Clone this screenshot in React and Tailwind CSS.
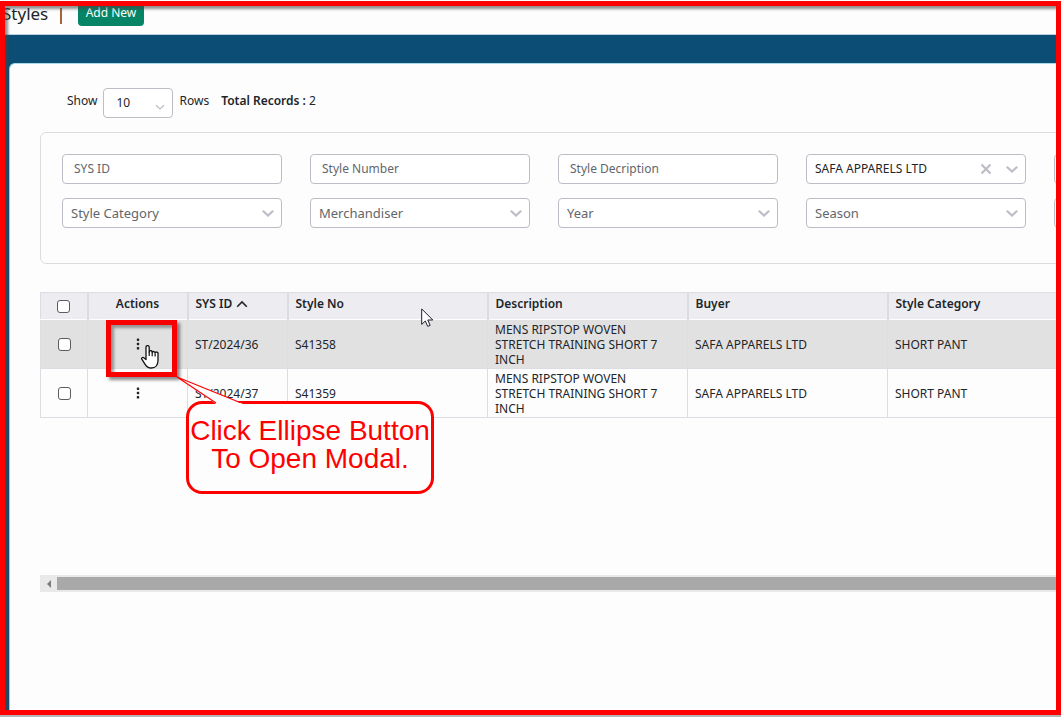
import React from "react";

const rows = [
  { id: "ST/2024/36", no: "S41358", active: true },
  { id: "ST/2024/37", no: "S41359", active: false },
];

function Chevron({ className }) {
  return (
    <svg viewBox="0 0 14 14" className={className} fill="none" stroke="currentColor" strokeWidth="2.2" aria-hidden="true">
      <path d="M1.8 4.8 7 9.6l5.2-4.8" />
    </svg>
  );
}

const fieldBox = "h-[30px] w-full rounded border border-[#bdbdc5] bg-white outline-none";

function TextField({ label }) {
  return (
    <input
      type="text"
      aria-label={label}
      placeholder={label}
      className={`${fieldBox} px-[11px] pb-0.5 text-xs text-[#212529] placeholder:text-[#62666b]`}
    />
  );
}

function SelectField({ label, value }) {
  return (
    <div className="relative">
      <select
        aria-label={label}
        className={`${fieldBox} appearance-none pr-12 pl-2 ${value ? "text-xs text-[#212529]" : "pt-0.5 text-[13px] text-[#62666b]"}`}
      >
        <option>{value || label}</option>
      </select>
      {value && (
        <button type="button" aria-label="Clear buyer" className="absolute top-2 right-[33px] text-[#bdbdc5]">
          <svg viewBox="0 0 14 14" className="size-3.5" fill="none" stroke="currentColor" strokeWidth="2.2" aria-hidden="true">
            <path d="m2.5 2.5 9 9m0-9-9 9" />
          </svg>
        </button>
      )}
      <Chevron className="pointer-events-none absolute top-2 right-[7px] size-3.5 text-[#bdbdc5]" />
    </div>
  );
}

function Check({ label }) {
  return (
    <input
      type="checkbox"
      aria-label={label}
      className="mx-auto block size-[13px] appearance-none rounded-[3px] border border-[#5c5c5c] bg-white"
    />
  );
}

function HeadCell({ children }) {
  return (
    <th scope="col" className="border-l-2 border-[#dcdce3] px-[7px] pb-1 text-left font-semibold">
      {children}
    </th>
  );
}

function Cell({ children }) {
  return <td className="border-l border-[#dcdce3] py-0 pr-5 pl-[7px]">{children}</td>;
}

export default function App() {
  return (
    <div className="relative flex min-h-screen flex-col overflow-hidden bg-[#0b4d75] font-['Noto_Sans','Open_Sans',sans-serif] text-xs text-[#212529]">
      <header className="flex h-[35px] shrink-0 items-start border-b border-[#b9d3e4] bg-[#fdfdfd] pl-0.5">
        <h1 className="flex gap-2 text-[17px] leading-7">
          <span>Styles</span>
          <span>|</span>
        </h1>
        <button type="button" className="ml-3 h-[26px] rounded bg-[#058466] px-2 text-xs text-white">
          Add New
        </button>
      </header>

      <main className="mt-7 ml-[9px] flex-1 overflow-hidden rounded-tl-md border-t border-l border-[#a9d9ea] bg-[#fdfdfd] pt-6 pl-[30px]">
        <div className="flex items-center">
          <label htmlFor="page-size" className="ml-[27px] pb-1">Show</label>
          <div className="relative ml-1.5">
            <select id="page-size" className="h-[30px] w-[70px] appearance-none rounded border border-[#bdbdc5] bg-white pl-3">
              <option>10</option>
            </select>
            <svg viewBox="0 0 10 10" className="pointer-events-none absolute right-2 bottom-1.5 size-2.5" fill="none" stroke="#bdbdc5" strokeWidth="1.2" aria-hidden="true">
              <path d="M1 3.2 5 7l4-3.8" />
            </svg>
          </div>
          <span className="ml-1.5 pb-1">Rows</span>
          <p className="ml-3 pb-1">
            <span className="font-semibold">Total Records :</span> 2
          </p>
        </div>

        <form className="mt-3.5 h-[132px] w-[1280px] rounded-md border border-[#dcdce0] px-[21px] pt-[21px]">
          <div className="grid grid-cols-[repeat(5,220px)] gap-x-7 gap-y-3.5">
            <TextField label="SYS ID" />
            <TextField label="Style Number" />
            <TextField label="Style Decription" />
            <SelectField label="Buyer" value="SAFA APPARELS LTD" />
            <input type="text" aria-label="Department" className={fieldBox} />
            <SelectField label="Style Category" />
            <SelectField label="Merchandiser" />
            <SelectField label="Year" />
            <SelectField label="Season" />
            <input type="text" aria-label="Status" className={fieldBox} />
          </div>
        </form>

        <div className="mt-7 min-h-[283px] overflow-hidden">
          <table className="w-[1247px] table-fixed border-collapse border border-[#dcdce3]">
            <colgroup>
              <col className="w-[47px]" />
              <col className="w-[100px]" />
              <col className="w-[100px]" />
              <col className="w-[200px]" />
              <col className="w-[200px]" />
              <col className="w-[200px]" />
              <col className="w-[400px]" />
            </colgroup>
            <thead>
              <tr className="h-[27px] border-b border-white bg-[#ededf1]">
                <th scope="col"><Check label="Select all styles" /></th>
                <th scope="col" className="border-l-2 border-[#dcdce3] pb-1 font-semibold">Actions</th>
                <HeadCell>
                  <span className="flex items-center gap-1">
                    SYS ID
                    <svg viewBox="0 0 12 8" className="h-2 w-3" fill="none" stroke="currentColor" strokeWidth="1.6" aria-hidden="true">
                      <path d="M1.2 6.8 6 2l4.8 4.8" />
                    </svg>
                  </span>
                </HeadCell>
                <HeadCell>Style No</HeadCell>
                <HeadCell>Description</HeadCell>
                <HeadCell>Buyer</HeadCell>
                <HeadCell>Style Category</HeadCell>
              </tr>
            </thead>
            <tbody className="leading-[15px]">
              {rows.map((row) => (
                <tr key={row.id} className={`h-[49px] border-b border-[#dcdce3] ${row.active ? "bg-[#e1e1e1]" : "bg-[#fdfdfd]"}`}>
                  <td className="p-0"><Check label={`Select ${row.id}`} /></td>
                  <td className="border-l border-[#dcdce3] p-0">
                    <button type="button" aria-label={`Actions for ${row.id}`} className="mx-auto block">
                      <svg viewBox="0 0 4 12" className="h-3 w-1" fill="currentColor" aria-hidden="true">
                        <rect x="0.8" y="0.5" width="2.4" height="2.4" rx="0.6" />
                        <rect x="0.8" y="4.8" width="2.4" height="2.4" rx="0.6" />
                        <rect x="0.8" y="9.1" width="2.4" height="2.4" rx="0.6" />
                      </svg>
                    </button>
                  </td>
                  <Cell>{row.id}</Cell>
                  <Cell>{row.no}</Cell>
                  <Cell>MENS RIPSTOP WOVEN STRETCH TRAINING SHORT 7 INCH</Cell>
                  <Cell>SAFA APPARELS LTD</Cell>
                  <Cell>SHORT PANT</Cell>
                </tr>
              ))}
            </tbody>
          </table>
        </div>

        <div className="flex h-[17px] items-center bg-[#e9e9e9]">
          <button type="button" aria-label="Scroll left" className="flex w-[17px] shrink-0 justify-center">
            <svg viewBox="0 0 4 8" className="h-2 w-1" fill="#7d7d7d" aria-hidden="true">
              <path d="M4 0v8L0 4z" />
            </svg>
          </button>
          <div className="h-[13px] flex-1 bg-[#a9a9a9]" />
        </div>
      </main>

      {/* Tutorial annotations */}
      <div className="pointer-events-none absolute inset-x-0 top-0 bottom-0 border-t border-b-2 border-t-white border-b-[#b5b5b5]">
        <div className="h-full border-[5px] border-[#ff0000] shadow-[inset_3px_3px_3px_rgba(70,70,70,0.6)]" />
      </div>

      <div className="pointer-events-none absolute top-80 left-[106px] h-[57px] w-[71px] border-[5px] border-[#f90000] shadow-[3px_3px_3px_rgba(0,0,0,0.45),inset_3px_3px_3px_rgba(0,0,0,0.35)]" />

      <p className="pointer-events-none absolute top-[401px] left-[186px] flex h-[93px] w-[248px] justify-center rounded-[16px] border-[3px] border-[#ff0000] bg-[#fdfdfd] pt-[13px] text-center font-['Liberation_Sans',Arial,sans-serif] text-[28px] leading-7 whitespace-nowrap text-[#ff0000]">
        Click Ellipse Button
        <br />
        To Open Modal.
      </p>
      <svg viewBox="0 0 70 30" className="pointer-events-none absolute top-[376px] left-[176px] h-[30px] w-[70px]" aria-hidden="true">
        <path d="M1 1 40 28h27z" fill="#fdfdfd" />
        <path d="M40 27 1 1l63 25.500" fill="none" stroke="#ff0000" strokeWidth="1.2" />
      </svg>

      <svg viewBox="0 0 18 24" className="pointer-events-none absolute top-[345px] left-[141px] h-6 w-[18px]" aria-hidden="true">
        <path
          d="M5 14.500V2.200a1.600 1.600 0 0 1 3.200 0V7a1.500 1.500 0 0 1 3 .500 1.500 1.500 0 0 1 2.900.600 1.500 1.500 0 0 1 2.900.900v6.500c0 4.200-2.400 7.500-6.600 7.500-3.400 0-5-1.500-6.600-4.200l-3-4.600c-.700-1.200.900-2.300 2-1.400z"
          fill="#fff"
          stroke="#111"
          strokeWidth="1.300"
          strokeLinejoin="round"
        />
        <path d="M8.200 7v4M11.200 7.500v3.700M14.100 8.500v3" fill="none" stroke="#111" strokeWidth="1.200" />
      </svg>
      <svg viewBox="0 0 13 20" className="pointer-events-none absolute top-[308px] left-[421px] h-5 w-[13px]" aria-hidden="true">
        <path d="M.700.900v15.500l3.600-3.400 2.400 5.400 2.400-1-2.300-5.400h5z" fill="#fff" stroke="#1f1f2b" strokeWidth="1" />
      </svg>
    </div>
  );
}
